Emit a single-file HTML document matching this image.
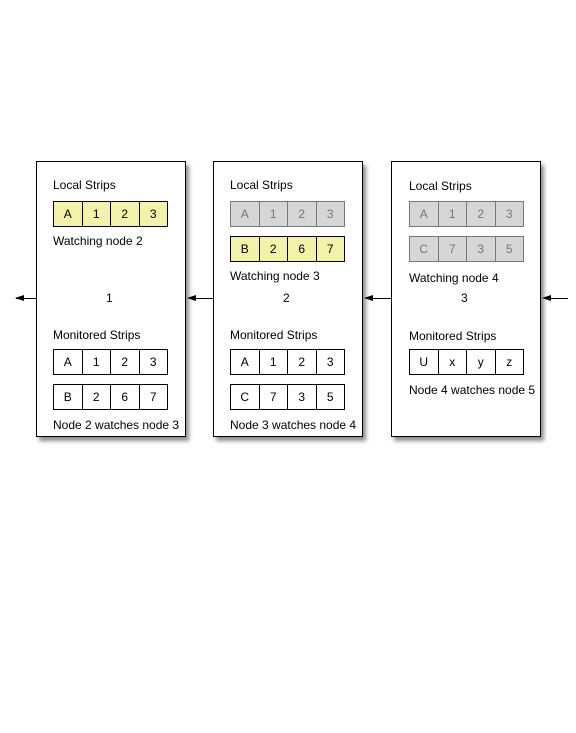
<!DOCTYPE html><html><head><style>
body{margin:0;width:576px;height:733px;background:#fff;position:relative;overflow:hidden;font-family:"Liberation Sans",sans-serif;font-size:12px;color:#000}
.box{position:absolute;top:161px;width:148px;height:274px;border:1px solid #000;background:#fff;box-shadow:3px 4px 4px rgba(0,0,0,.45)}
.t{position:absolute;white-space:nowrap;line-height:14px}
.s{position:absolute;height:24px;display:flex;border:1px solid #000;width:113px}
.s div{flex:1;text-align:center;line-height:24px;border-left:1px solid #000}
.s div:first-child{border-left:none}
.y{background:#f2f2aa}
.g{background:#d6d6d6;border-color:#777}.g div{border-color:#777;color:#777}
.a{position:absolute;height:1px;background:#000;top:298px}
.h{position:absolute;top:295px;width:0;height:0;border-top:3.5px solid transparent;border-bottom:3.5px solid transparent;border-right:9px solid #000}
</style></head><body>
<div class="box" style="left:36px"></div>
<div class="box" style="left:213px"></div>
<div class="box" style="left:391px"></div>

<div class="t" style="left:53px;top:178px">Local Strips</div>
<div class="s y" style="left:53px;top:201px"><div>A</div><div>1</div><div>2</div><div>3</div></div>
<div class="t" style="left:53px;top:234px">Watching node 2</div>
<div class="t" style="left:106px;top:291px">1</div>
<div class="t" style="left:53px;top:328px">Monitored Strips</div>
<div class="s" style="left:53px;top:349px"><div>A</div><div>1</div><div>2</div><div>3</div></div>
<div class="s" style="left:53px;top:384px"><div>B</div><div>2</div><div>6</div><div>7</div></div>
<div class="t" style="left:53px;top:418px">Node 2 watches node 3</div>

<div class="t" style="left:230px;top:178px">Local Strips</div>
<div class="s g" style="left:230px;top:201px"><div>A</div><div>1</div><div>2</div><div>3</div></div>
<div class="s y" style="left:230px;top:236px"><div>B</div><div>2</div><div>6</div><div>7</div></div>
<div class="t" style="left:230px;top:269px">Watching node 3</div>
<div class="t" style="left:283px;top:291px">2</div>
<div class="t" style="left:230px;top:328px">Monitored Strips</div>
<div class="s" style="left:230px;top:349px"><div>A</div><div>1</div><div>2</div><div>3</div></div>
<div class="s" style="left:230px;top:384px"><div>C</div><div>7</div><div>3</div><div>5</div></div>
<div class="t" style="left:230px;top:418px">Node 3 watches node 4</div>

<div class="t" style="left:409px;top:179px">Local Strips</div>
<div class="s g" style="left:409px;top:201px"><div>A</div><div>1</div><div>2</div><div>3</div></div>
<div class="s g" style="left:409px;top:236px"><div>C</div><div>7</div><div>3</div><div>5</div></div>
<div class="t" style="left:409px;top:271px">Watching node 4</div>
<div class="t" style="left:461px;top:291px">3</div>
<div class="t" style="left:409px;top:329px">Monitored Strips</div>
<div class="s" style="left:409px;top:349px"><div>U</div><div>x</div><div>y</div><div>z</div></div>
<div class="t" style="left:409px;top:383px">Node 4 watches node 5</div>

<div class="a" style="left:16px;width:20px"></div><div class="h" style="left:15px"></div>
<div class="a" style="left:190px;width:23px"></div><div class="h" style="left:187px"></div>
<div class="a" style="left:368px;width:23px"></div><div class="h" style="left:364px"></div>
<div class="a" style="left:546px;width:22px"></div><div class="h" style="left:542px"></div>
</body></html>
